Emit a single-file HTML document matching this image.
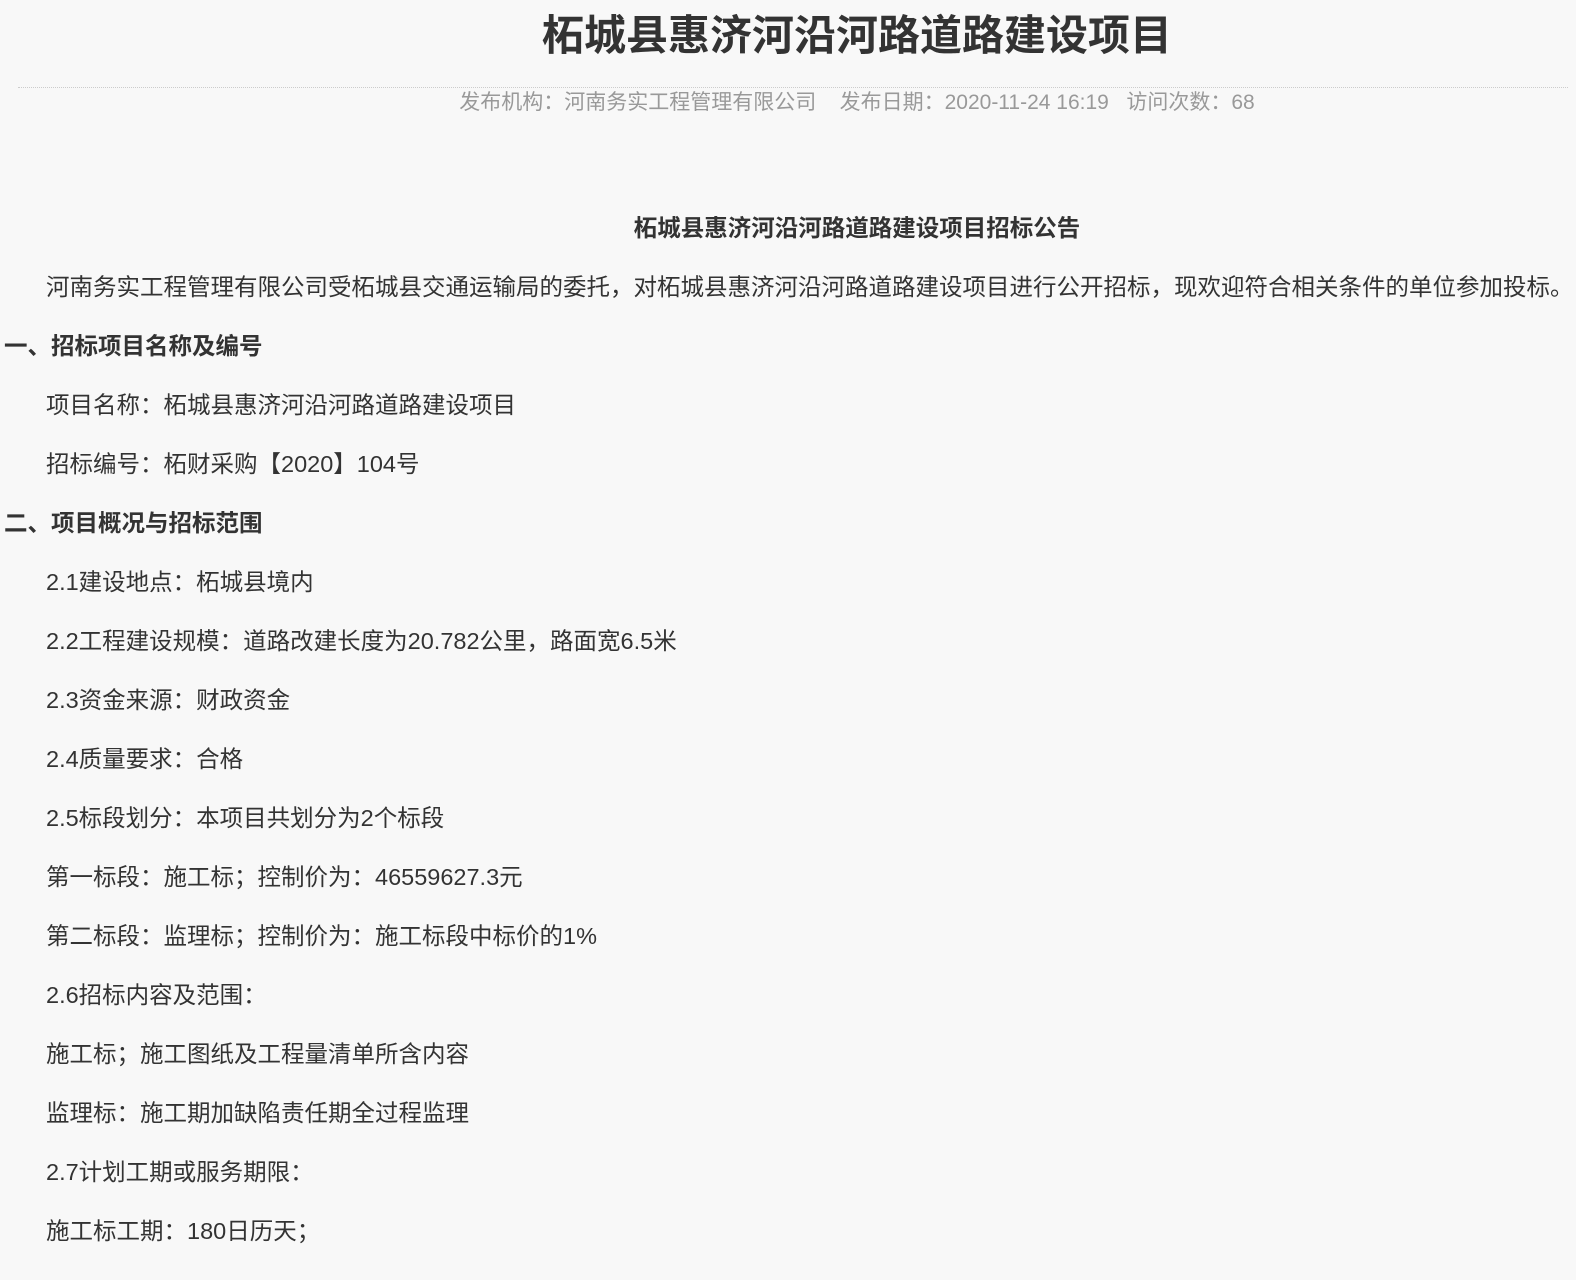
<!DOCTYPE html>
<html><head><meta charset="utf-8"><style>
html,body{margin:0;padding:0;background:#f8f8f8;}
body{width:1576px;height:1280px;overflow:hidden;position:relative;font-family:"Liberation Sans","Noto Sans CJK SC",sans-serif;color:#333;}
.wrap{position:absolute;left:0;top:0;width:1714px;}
h1{margin:0;position:absolute;top:6px;left:0;width:1714px;text-align:center;font-size:42px;line-height:60px;font-weight:bold;color:#333;}
.line{position:absolute;top:87px;left:18px;width:1550px;border-top:1px dotted #ccc;}
.meta{position:absolute;top:89px;left:0;width:1714px;text-align:center;font-size:21px;line-height:28px;color:#999;}
.c{position:absolute;top:199px;left:0;width:1714px;font-size:23.5px;}
.c p{margin:0;height:59px;line-height:59px;white-space:nowrap;}
.ind{padding-left:46px;}
.h{padding-left:4px;font-weight:bold;}
.t{text-align:center;font-weight:bold;}
</style></head><body><div class="wrap">
<h1>柘城县惠济河沿河路道路建设项目</h1>
<div class="line"></div>
<div class="meta">发布机构：河南务实工程管理有限公司&nbsp;&nbsp;&nbsp;&nbsp;发布日期：2020-11-24 16:19&nbsp;&nbsp;&nbsp;访问次数：68</div>
<div class="c">
<p class="t">柘城县惠济河沿河路道路建设项目招标公告</p>
<p class="ind">河南务实工程管理有限公司受柘城县交通运输局的委托，对柘城县惠济河沿河路道路建设项目进行公开招标，现欢迎符合相关条件的单位参加投标。</p>
<p class="h">一、招标项目名称及编号</p>
<p class="ind">项目名称：柘城县惠济河沿河路道路建设项目</p>
<p class="ind">招标编号：柘财采购【2020】104号</p>
<p class="h">二、项目概况与招标范围</p>
<p class="ind">2.1建设地点：柘城县境内</p>
<p class="ind">2.2工程建设规模：道路改建长度为20.782公里，路面宽6.5米</p>
<p class="ind">2.3资金来源：财政资金</p>
<p class="ind">2.4质量要求：合格</p>
<p class="ind">2.5标段划分：本项目共划分为2个标段</p>
<p class="ind">第一标段：施工标；控制价为：46559627.3元</p>
<p class="ind">第二标段：监理标；控制价为：施工标段中标价的1%</p>
<p class="ind">2.6招标内容及范围：</p>
<p class="ind">施工标；施工图纸及工程量清单所含内容</p>
<p class="ind">监理标：施工期加缺陷责任期全过程监理</p>
<p class="ind">2.7计划工期或服务期限：</p>
<p class="ind">施工标工期：180日历天；</p>
</div></div></body></html>
